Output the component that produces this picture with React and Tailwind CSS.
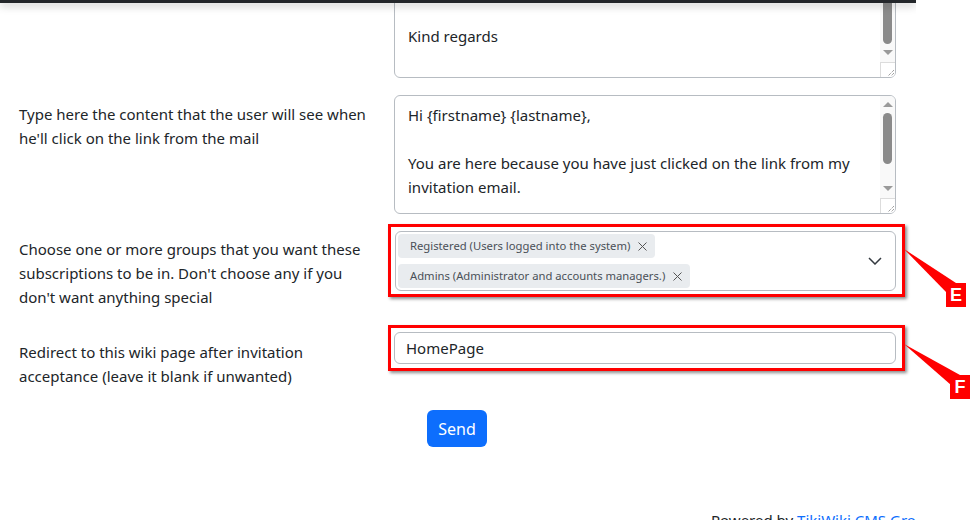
import React from "react";

const font = { fontFamily: '"Noto Sans", "Open Sans", sans-serif' };

function ScrollTrack({ thumbTop, thumbHeight, showUp }) {
  return (
    <div className="absolute right-0 top-0 bottom-0 w-[15px] bg-[#f9f9f9] flex flex-col items-center">
      {showUp && (
        <div className="absolute top-[6px] w-0 h-0 border-l-[5px] border-r-[5px] border-b-[5px] border-l-transparent border-r-transparent border-b-[#9a9a9a]" />
      )}
      <div
        className="absolute left-[3px] w-[9px] rounded-full bg-[#8a8a8a]"
        style={{ top: thumbTop, height: thumbHeight }}
      />
      <div className="absolute bottom-[22px] w-0 h-0 border-l-[5px] border-r-[5px] border-t-[5px] border-l-transparent border-r-transparent border-t-[#9a9a9a]" />
      <div className="absolute bottom-0 right-0 w-[15px] h-[15px] border-l border-t border-[#dcdcdc] bg-white">
        <svg width="15" height="15" viewBox="0 0 15 15" className="absolute inset-0">
          <path d="M13 7 L7 13 M13 10 L10 13" stroke="#777" strokeWidth="1" strokeDasharray="1 1" />
        </svg>
      </div>
    </div>
  );
}

function Label({ children, pt = "pt-[7px]" }) {
  return (
    <div className={`w-[394px] shrink-0 pl-[19px] pr-[12px] ${pt} pb-[7px] text-[15px] leading-[24px] text-[#212529]`}>
      {children}
    </div>
  );
}

function Tag({ children }) {
  return (
    <span className="inline-flex items-center h-[24px] pl-[12px] pr-[8px] rounded-[4px] bg-[#e9ecef] text-[11.25px] text-[#495057]">
      {children}
      <svg width="9" height="9" viewBox="0 0 9 9" className="ml-[8px]">
        <path d="M0.5 0.5 L8.5 8.5 M8.5 0.5 L0.5 8.5" stroke="#555" strokeWidth="1" />
      </svg>
    </span>
  );
}

export default function App() {
  return (
    <div className="relative w-[971px] h-[520px] overflow-hidden bg-white" style={font}>
      {/* page column */}
      <div className="relative w-[916px] h-full overflow-hidden">
        {/* fixed top navbar edge with shadow */}
        <div className="absolute top-0 left-0 right-0 z-10 h-[3px] bg-[#24272b] shadow-[0_2px_8px_rgba(0,0,0,0.35)]" />

        <div className="flex flex-col">
          {/* closing message textarea (scrolled) */}
          <div className="flex mt-[-41px] mb-[17px]">
            <Label />
            <div className="relative w-[502px] h-[119px] border border-[#b7bcc2] rounded-[6px] overflow-hidden bg-white">
              <div className="pl-[13px] pt-[64px] text-[15px] leading-[24px] text-[#212529]">Kind regards</div>
              <ScrollTrack thumbTop={32} thumbHeight={52} showUp={false} />
            </div>
          </div>

          {/* landing content textarea */}
          <div className="flex mb-[17px]">
            <Label>Type here the content that the user will see when he'll click on the link from the mail</Label>
            <div className="relative w-[502px] h-[119px] border border-[#b7bcc2] rounded-[6px] overflow-hidden bg-white">
              <div className="pl-[13px] pt-[7px] pr-[24px] text-[15px] leading-[24px] text-[#212529]">
                <div>Hi {"{firstname}"} {"{lastname}"},</div>
                <div className="h-[24px]" />
                <div>You are here because you have just clicked on the link from my invitation email.</div>
              </div>
              <ScrollTrack thumbTop={17} thumbHeight={51} showUp />
            </div>
          </div>

          {/* groups multiselect */}
          <div className="flex mb-[16px]">
            <Label pt="pt-[6px]">
              Choose one or more groups that you want these subscriptions to be in. Don't choose any if you don't want anything special
            </Label>
            <div className="relative ml-[1px] w-[501px] h-[60px] border border-[#b7bcc2] rounded-[6px] bg-white flex items-center">
              <div className="flex flex-col items-start gap-[6px] pl-[2px] flex-1">
                <Tag>Registered (Users logged into the system)</Tag>
                <Tag>Admins (Administrator and accounts managers.)</Tag>
              </div>
              <svg width="14" height="8" viewBox="0 0 14 8" className="mr-[13px]">
                <path d="M1 1 L7 7 L13 1" fill="none" stroke="#343a40" strokeWidth="1.5" />
              </svg>
            </div>
          </div>

          {/* redirect page input */}
          <div className="flex mb-[15px]">
            <Label pt="pt-[8px]">Redirect to this wiki page after invitation acceptance (leave it blank if unwanted)</Label>
            <div className="w-[502px] h-[32px] border border-[#b7bcc2] rounded-[6px] bg-white flex items-center pl-[11px] text-[15px] text-[#212529]">
              HomePage
            </div>
          </div>

          {/* submit */}
          <div className="flex">
            <div className="w-[394px] shrink-0" />
            <button className="ml-[33px] w-[60px] h-[37px] rounded-[6px] bg-[#0d6efd] text-white text-[16px]">Send</button>
          </div>

          {/* footer */}
          <div className="mt-[61px] pl-[711px] text-[15px] leading-[24px] text-[#212529] whitespace-nowrap">
            Powered by <span className="text-[#0d6efd]">TikiWiki CMS Groupware</span>
          </div>
        </div>
      </div>

      {/* callout boxes */}
      <div className="absolute left-[388px] top-[224px] w-[517px] h-[73px] border-[3px] border-[#ff0000] shadow-[2px_2px_3px_rgba(0,0,0,0.45)]" />
      <div className="absolute left-[388px] top-[325px] w-[517px] h-[46px] border-[3px] border-[#ff0000] shadow-[2px_2px_3px_rgba(0,0,0,0.45)]" />

      <svg className="absolute inset-0 pointer-events-none" width="971" height="520">
        <polygon points="904,249 956,283 947,293" fill="#ff0000" />
        <polygon points="904,344 960,375 951,385" fill="#ff0000" />
      </svg>
      <div className="absolute left-[946px] top-[283px] w-[20px] h-[24px] bg-[#ff0000] text-white font-bold text-[18px] leading-[24px] text-center" style={{ fontFamily: '"Liberation Sans", Arial, sans-serif' }}>E</div>
      <div className="absolute left-[950px] top-[375px] w-[20px] h-[24px] bg-[#ff0000] text-white font-bold text-[18px] leading-[24px] text-center" style={{ fontFamily: '"Liberation Sans", Arial, sans-serif' }}>F</div>
    </div>
  );
}
